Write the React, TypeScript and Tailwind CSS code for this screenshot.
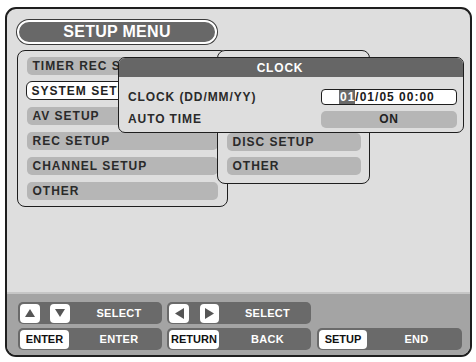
import React from "react";

const Tri = ({ dir }: { dir: "up" | "down" | "left" | "right" }) => {
  const pts =
    dir === "up"
      ? "1,9 6,1 11,9"
      : dir === "down"
      ? "1,1 11,1 6,9"
      : dir === "left"
      ? "10,0 10,11 1,5.5"
      : "1,0 1,11 10,5.5";
  const w = dir === "up" || dir === "down" ? 12 : 11;
  const h = dir === "up" || dir === "down" ? 10 : 11;
  return (
    <svg width={w} height={h} viewBox={`0 0 ${w} ${h}`}>
      <polygon points={pts} fill="#555" />
    </svg>
  );
};

const Item = ({ label, hl }: { label: string; hl?: boolean }) => (
  <div
    className={
      hl
        ? "h-[19px] -mx-[1px] -my-[0.5px] rounded-[6px] border-[1.5px] border-[#1e1e1e] bg-white flex items-center pl-[5px] text-[12px] font-bold tracking-[1px] text-[#222] whitespace-nowrap overflow-hidden"
        : "h-[18px] rounded-[5px] bg-[#b6b6b6] flex items-center pl-[6px] text-[12px] font-bold tracking-[1px] text-[#2a2a2a] whitespace-nowrap overflow-hidden"
    }
  >
    {label}
  </div>
);

const Btn = ({ children, w }: { children: React.ReactNode; w: string }) => (
  <div
    className={`${w} h-[19px] rounded-[4px] bg-white flex items-center justify-center text-[11px] font-bold text-[#111]`}
  >
    {children}
  </div>
);

export default function App() {
  return (
    <div className="w-[476px] h-[362px] bg-white pl-[5px] pt-[7px] font-['Liberation_Sans',Arial,sans-serif]">
      <div className="w-[467px] h-[350px] rounded-[11px] border-2 border-[#1e1e1e] bg-[#dedede] overflow-hidden flex flex-col">
        <div className="relative flex-1 flex flex-col pl-[10px] pt-[11px]">
          <div className="w-[200px] h-[24px] rounded-full bg-[#686868] border-2 border-white ring-1 ring-[#3a3a3a] flex items-center justify-center text-white text-[16px] font-bold tracking-[0.3px]">
            SETUP MENU
          </div>
          <div className="mt-[6px] w-[211px] h-[157px] rounded-[8px] border-[1.5px] border-[#1e1e1e] pl-[8.5px] pr-[9.5px] pt-[5.5px] flex flex-col gap-[7px]">
            <Item label="TIMER REC SETUP" />
            <Item label="SYSTEM SETUP" hl />
            <Item label="AV SETUP" />
            <Item label="REC SETUP" />
            <Item label="CHANNEL SETUP" />
            <Item label="OTHER" />
          </div>

          <div className="absolute left-[210px] top-[41px] w-[153px] h-[134px] rounded-[8px] border-[1.5px] border-[#1e1e1e] bg-[#dedede] px-[8.5px] pt-[10px] flex flex-col gap-[6px]">
            <Item label="TIMER REC" />
            <Item label="SYSTEM" />
            <Item label="AV SETUP" />
            <Item label="DISC SETUP" />
            <Item label="OTHER" />
          </div>

          <div className="absolute left-[111px] top-[48px] w-[346px] h-[76px] rounded-[7px] border-[1.5px] border-[#1e1e1e] bg-[#dedede] overflow-hidden flex flex-col">
            <div className="h-[19px] bg-[#666] flex items-center justify-center pr-[22px] text-white text-[12px] font-bold tracking-[0.8px]">
              CLOCK
            </div>
            <div className="flex items-center h-[18px] mt-[11px] pl-[9px]">
              <div className="flex-1 text-[12px] font-bold tracking-[0.9px] text-[#2a2a2a]">
                CLOCK (DD/MM/YY)
              </div>
              <div className="w-[136px] h-[16px] mr-[6px] rounded-[4px] border-[1.5px] border-[#1e1e1e] bg-white flex items-center pl-[17px] text-[12px] font-bold tracking-[1px] text-[#1a1a1a]">
                <span className="bg-[#6a6a6a] text-white h-[14px] flex items-center pl-[1px]">01</span>
                <span>/01/05 00:00</span>
              </div>
            </div>
            <div className="flex items-center h-[18px] mt-[4px] pl-[9px]">
              <div className="flex-1 text-[12px] font-bold tracking-[0.9px] text-[#2a2a2a]">
                AUTO TIME
              </div>
              <div className="w-[136px] h-[17px] mr-[6px] rounded-[5px] bg-[#b6b6b6] flex items-center justify-center text-[12px] font-bold tracking-[0.8px] text-[#222]">
                ON
              </div>
            </div>
          </div>
        </div>

        <div className="h-[63px] bg-[#a4a4a4] border-t-2 border-[#c6c6c6] pl-[11px] pt-[8px] flex flex-col gap-[4px]">
          <div className="flex gap-[5px]">
            <div className="w-[144px] h-[22px] rounded-[5px] bg-[#6a6a6a] flex items-center px-[2px]">
              <Btn w="w-[20px]"><Tri dir="up" /></Btn>
              <div className="ml-[10px]"><Btn w="w-[20px]"><Tri dir="down" /></Btn></div>
              <div className="flex-1 text-center pl-[8px] text-white text-[11px] font-bold tracking-[0.3px]">SELECT</div>
            </div>
            <div className="w-[144px] h-[22px] rounded-[5px] bg-[#6a6a6a] flex items-center px-[2px]">
              <Btn w="w-[20px]"><Tri dir="left" /></Btn>
              <div className="ml-[11px]"><Btn w="w-[19px]"><Tri dir="right" /></Btn></div>
              <div className="flex-1 text-center pl-[7px] text-white text-[11px] font-bold tracking-[0.3px]">SELECT</div>
            </div>
          </div>
          <div className="flex gap-[5px]">
            <div className="w-[144px] h-[22px] rounded-[5px] bg-[#6a6a6a] flex items-center px-[2px]">
              <Btn w="w-[49px]">ENTER</Btn>
              <div className="flex-1 text-center pl-[9px] text-white text-[11px] font-bold tracking-[0.3px]">ENTER</div>
            </div>
            <div className="w-[144px] h-[22px] rounded-[5px] bg-[#6a6a6a] flex items-center px-[2px]">
              <Btn w="w-[50px]">RETURN</Btn>
              <div className="flex-1 text-center pl-[7px] text-white text-[11px] font-bold tracking-[0.3px]">BACK</div>
            </div>
            <div className="ml-[1px] w-[145px] h-[22px] rounded-[5px] bg-[#6a6a6a] flex items-center px-[2px]">
              <Btn w="w-[48px]">SETUP</Btn>
              <div className="flex-1 text-center pl-[6px] text-white text-[11px] font-bold tracking-[0.3px]">END</div>
            </div>
          </div>
        </div>
      </div>
    </div>
  );
}
